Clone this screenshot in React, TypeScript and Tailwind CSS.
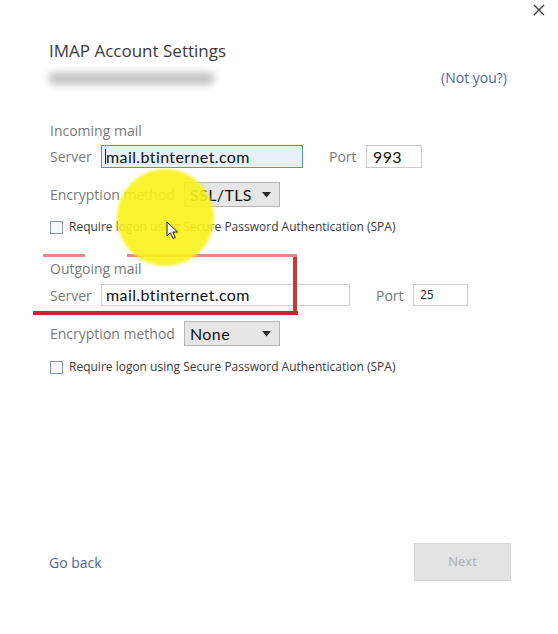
import React from "react";

const ui = { fontFamily: '"Open Sans", "Noto Sans", sans-serif' };
const field = { fontFamily: 'Lato, "Open Sans", sans-serif', letterSpacing: "0.4px" };

function Caret() {
  return (
    <svg width="9" height="6" viewBox="0 0 9 6" className="shrink-0">
      <path d="M0 0 H9 L4.5 5.5 Z" fill="#2a2a2a" />
    </svg>
  );
}

function Checkbox({ label }: { label: string }) {
  return (
    <div className="flex items-center h-[16px] gap-[6px]">
      <span className="w-[13px] h-[13px] border border-[#8a9bb0] bg-[#f6f8fb] shrink-0" />
      <span className="text-[12px] leading-[16px] text-[#3a3a3a]">{label}</span>
    </div>
  );
}

function Select({ value }: { value: string }) {
  return (
    <div className="w-[96px] h-[25px] border border-[#b4b4b4] bg-[#e6e6e6] flex items-center justify-between pl-[5px] pr-[8px]">
      <span style={field} className="text-[16px] text-[#111] leading-[20px]">
        {value}
      </span>
      <Caret />
    </div>
  );
}

export default function App() {
  return (
    <div
      style={ui}
      className="relative w-[558px] h-[634px] bg-white overflow-hidden flex flex-col"
    >
      {/* window close */}
      <div className="flex justify-end h-[22px] pt-[4px] pr-[13px]">
        <svg width="12" height="12" viewBox="0 0 12 12">
          <path d="M1 1 L11 11 M11 1 L1 11" stroke="#3c3c3c" strokeWidth="1.4" />
        </svg>
      </div>

      <h1 className="ml-[49px] mt-[17px] text-[17px] leading-[24px] text-[#3a3a3a]">
        IMAP Account Settings
      </h1>

      <div className="mt-[7px] h-[16px] flex items-center justify-between pl-[48px] pr-[51px]">
        <span className="w-[167px] h-[13px] rounded-full bg-[#c6c6c6] blur-[3.5px]" />
        <span className="text-[14px] leading-[16px] text-[#52649a]">(Not you?)</span>
      </div>

      {/* incoming */}
      <div className="pl-[50px] flex flex-col">
        <div className="mt-[36px] h-[18px] text-[14px] leading-[18px] text-[#7a7a7a]">
          Incoming mail
        </div>

        <div className="mt-[5px] h-[23px] flex items-center">
          <span className="w-[51px] text-[14px] text-[#7a7a7a]">Server</span>
          <div className="w-[202px] h-[23px] border border-[#5c8fd0] bg-[#e8f0fa] flex items-center pl-[3px]">
            <span className="w-px h-[15px] bg-[#222]" />
            <span style={field} className="text-[16px] text-[#111] leading-[20px]">
              mail.btinternet.com
            </span>
          </div>
          <span className="ml-[26px] w-[37px] text-[14px] text-[#7a7a7a]">Port</span>
          <div className="w-[56px] h-[23px] border border-[#c9c9c9] flex items-center pl-[6px]">
            <span style={field} className="text-[16px] text-[#111]">
              993
            </span>
          </div>
        </div>

        <div className="mt-[14px] h-[25px] flex items-center">
          <span className="w-[134px] text-[14px] text-[#7a7a7a]">Encryption method</span>
          <Select value="SSL/TLS" />
        </div>

        <div className="mt-[12px]">
          <Checkbox label="Require logon using Secure Password Authentication (SPA)" />
        </div>

        {/* outgoing */}
        <div className="mt-[25px] h-[18px] text-[14px] leading-[18px] text-[#7a7a7a]">
          Outgoing mail
        </div>

        <div className="mt-[6px] h-[22px] flex items-center">
          <span className="w-[51px] text-[14px] text-[#7a7a7a]">Server</span>
          <div className="w-[249px] h-[22px] border border-[#d0d0d0] flex items-center pl-[4px]">
            <span style={field} className="text-[16px] text-[#111] leading-[20px]">
              mail.btinternet.com
            </span>
          </div>
          <span className="ml-[26px] w-[37px] text-[14px] text-[#7a7a7a]">Port</span>
          <div className="w-[55px] h-[22px] border border-[#d0d0d0] flex items-center pl-[6px]">
            <span className="text-[12px] text-[#222]">25</span>
          </div>
        </div>

        <div className="mt-[15px] h-[25px] flex items-center">
          <span className="w-[134px] text-[14px] text-[#7a7a7a]">Encryption method</span>
          <Select value="None" />
        </div>

        <div className="mt-[13px]">
          <Checkbox label="Require logon using Secure Password Authentication (SPA)" />
        </div>
      </div>

      <div className="flex-1" />

      <div className="mb-[53px] h-[38px] flex items-center justify-between pl-[49px] pr-[47px]">
        <span className="text-[14px] text-[#4c6597]">Go back</span>
        <div className="w-[97px] h-[38px] bg-[#e3e3e3] border border-[#d8d8d8] flex items-center justify-center">
          <span className="text-[13px] text-[#ababab]">Next</span>
        </div>
      </div>

      {/* red highlight marker drawn over the outgoing server row */}
      <div className="absolute left-[43px] top-[254px] w-[42px] h-[3px] bg-[#e48888]" />
      <div className="absolute left-[127px] top-[254px] w-[170px] h-[3px] bg-[#e48888]" />
      <div className="absolute left-[293px] top-[257px] w-[4px] h-[58px] bg-[#c8383a]" />
      <div className="absolute left-[33px] top-[311px] w-[265px] h-[4px] bg-[#c4282e]" />

      {/* pointer highlight */}
      <div className="absolute left-[117px] top-[169px] w-[97px] h-[97px] rounded-full bg-[#f8f21a]/90 blur-[1.5px]" />

      {/* mouse pointer */}
      <svg
        className="absolute left-[166px] top-[221px]"
        width="13"
        height="19"
        viewBox="0 0 13 19"
      >
        <path
          d="M1 1 L1 15 L4.5 11.8 L7 17.5 L9.2 16.5 L6.8 11 L11.5 11 Z"
          fill="#ffffff"
          stroke="#1a1a1a"
          strokeWidth="1"
          strokeLinejoin="round"
        />
      </svg>
    </div>
  );
}
